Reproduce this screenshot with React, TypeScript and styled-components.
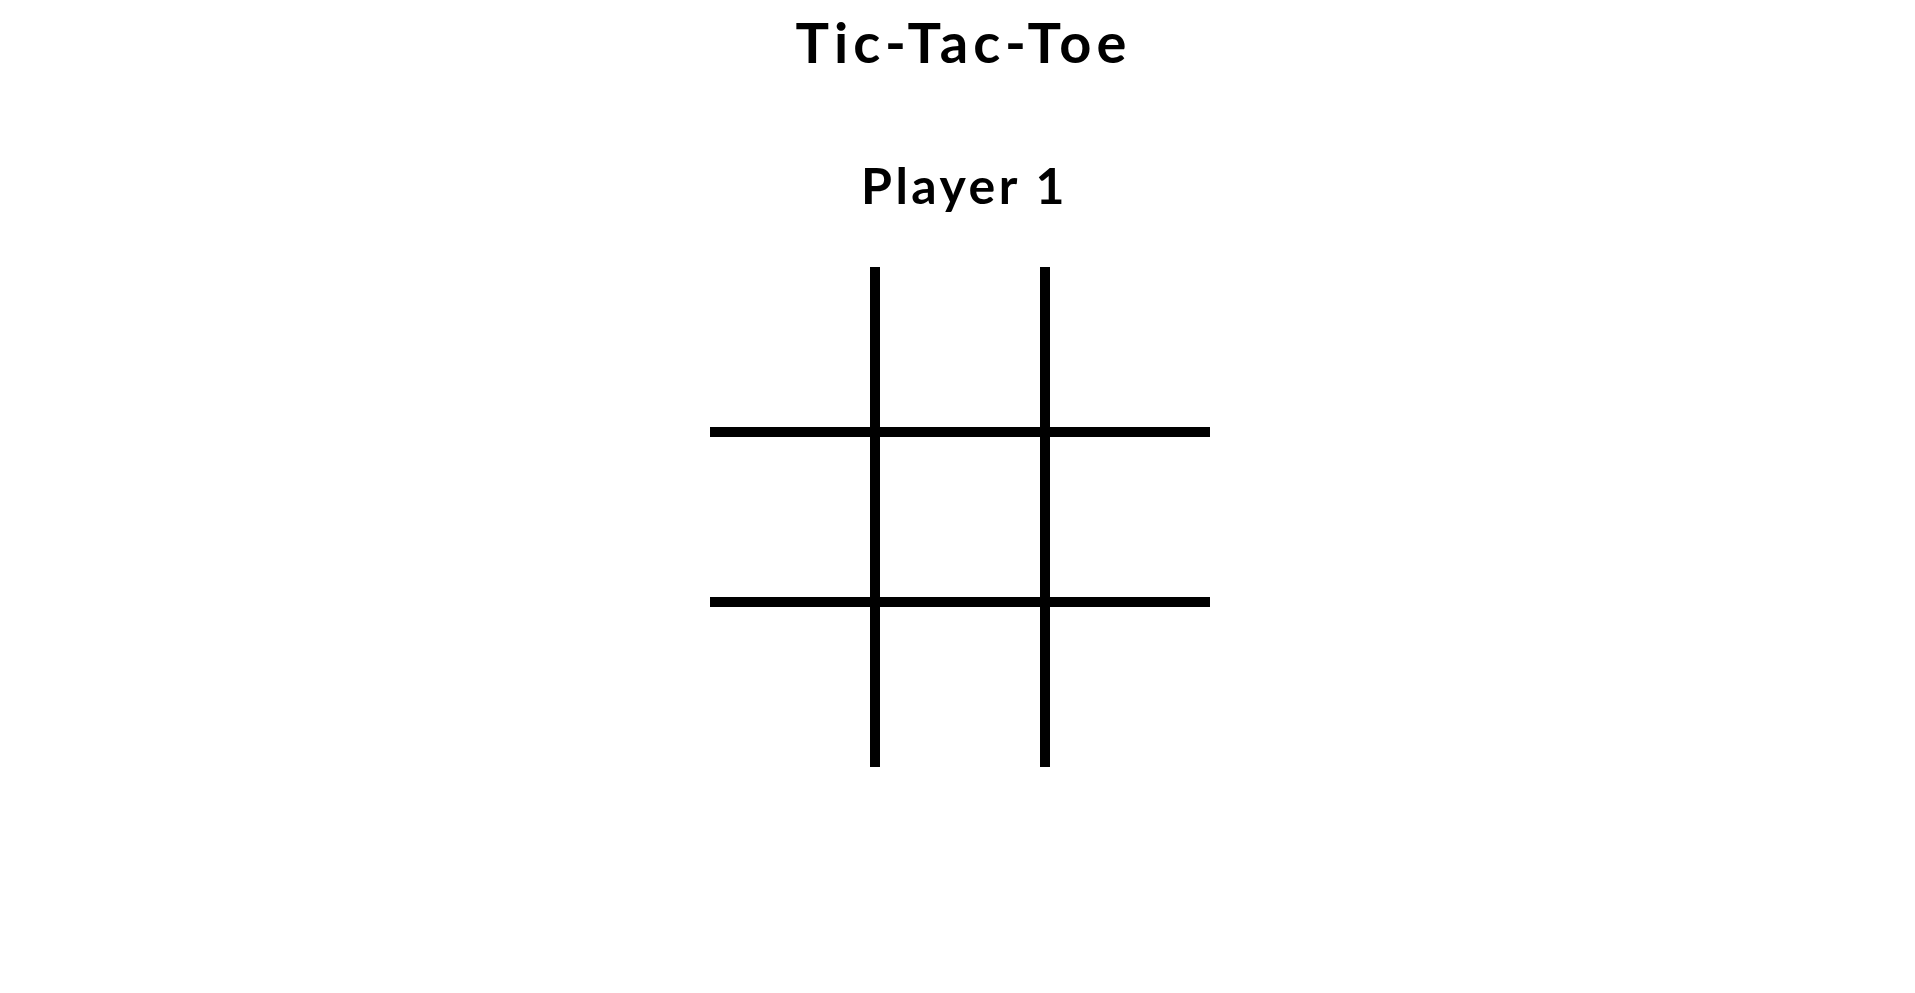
import { createGlobalStyle, styled } from "styled-components";

const GlobalStyle = createGlobalStyle`
  html, body {
    margin: 0;
    background: #fff;
  }
`;

const Page = styled.main`
  display: flex;
  flex-direction: column;
  align-items: center;
  min-height: 993px;
  box-sizing: border-box;
  padding-left: 5px;
  color: #000;
  font-family: "Lato", "Liberation Sans", sans-serif;
`;

const Title = styled.h1`
  margin: 0;
  height: 149px;
  padding-left: 7px;
  font-size: 56px;
  font-weight: 700;
  line-height: 84px;
  letter-spacing: 5px;
`;

const Status = styled.h2`
  margin: 0;
  height: 118px;
  padding-left: 9px;
  font-size: 50px;
  font-weight: 700;
  line-height: 72px;
  letter-spacing: 3.5px;
`;

const Board = styled.div`
  display: grid;
  grid-template-columns: repeat(3, 160px);
  grid-template-rows: repeat(3, 160px);
  gap: 10px;
  background: #000;
`;

const Cell = styled.button`
  border: 0;
  padding: 0;
  background: #fff;
`;

const cells = Array.from({ length: 9 }, (_, i) => i);

export default function App() {
  return (
    <Page>
      <GlobalStyle />
      <Title>Tic-Tac-Toe</Title>
      <Status>Player 1</Status>
      <Board>
        {cells.map((i) => (
          <Cell key={i} aria-label={`Cell ${i + 1}`} />
        ))}
      </Board>
    </Page>
  );
}
